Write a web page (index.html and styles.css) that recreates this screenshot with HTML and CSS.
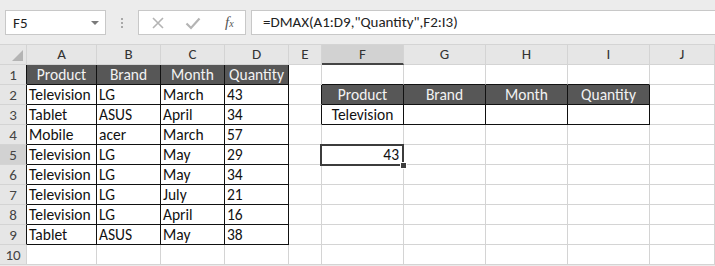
FILE: index.html
```html
<!DOCTYPE html>
<html lang="en">
<head>
    <meta charset="UTF-8">
    <meta name="viewport" content="width=device-width, initial-scale=1.0">
    <title>DMAX</title>
    <link rel="stylesheet" href="styles.css">
</head>
<body>
    <div class="toolbar">
        <div class="name-box">
            <span>F5</span>
            <span class="arrow"></span>
        </div>
        <div class="grip"><i></i><i></i><i></i></div>
        <div class="buttons">
            <svg class="btn" width="14" height="14" viewBox="0 0 14 14">
                <path d="M2 2 L12 12 M12 2 L2 12" stroke="#b4b4b4" stroke-width="1.6" fill="none"/>
            </svg>
            <svg class="btn" width="16" height="14" viewBox="0 0 16 14">
                <path d="M1.5 7.5 L6 12 L14.5 2.5" stroke="#b4b4b4" stroke-width="2.2" fill="none"/>
            </svg>
            <span class="fx">f<sub>x</sub></span>
        </div>
        <div class="formula">=DMAX(A1:D9,"Quantity",F2:I3)</div>
    </div>

    <div id="sheet" class="sheet"></div>

    <script>
        const letters = ['A', 'B', 'C', 'D', 'E', 'F', 'G', 'H', 'I', 'J'];

        // contenido de las filas 1 a 10, columnas A a J
        const rows = [
            ['Product', 'Brand', 'Month', 'Quantity', '', '', '', '', '', ''],
            ['Television', 'LG', 'March', '43', '', 'Product', 'Brand', 'Month', 'Quantity', ''],
            ['Tablet', 'ASUS', 'April', '34', '', 'Television', '', '', '', ''],
            ['Mobile', 'acer', 'March', '57', '', '', '', '', '', ''],
            ['Television', 'LG', 'May', '29', '', '43', '', '', '', ''],
            ['Television', 'LG', 'May', '34', '', '', '', '', '', ''],
            ['Television', 'LG', 'July', '21', '', '', '', '', '', ''],
            ['Television', 'LG', 'April', '16', '', '', '', '', '', ''],
            ['Tablet', 'ASUS', 'May', '38', '', '', '', '', '', ''],
            ['', '', '', '', '', '', '', '', '', '']
        ];

        // rangos con borde negro: [col inicio, fila inicio, col fin, fila fin]
        const boxes = [[1, 1, 4, 9], [6, 2, 9, 3]];
        const heads = [[1, 1, 4, 1], [6, 2, 9, 2]];
        const align = { 'F3': 'center', 'F5': 'right' };
        const active = { col: 6, row: 5 };

        function inRange(r, c, ranges) {
            return ranges.some(b => c >= b[0] && c <= b[2] && r >= b[1] && r <= b[3]);
        }

        const sheet = document.getElementById('sheet');

        function addCell(text, classes) {
            const div = document.createElement('div');
            div.className = classes.join(' ');
            div.textContent = text;
            sheet.appendChild(div);
            return div;
        }

        // fila de encabezados
        addCell('', ['corner']);
        letters.forEach((l, i) => {
            const cls = ['ch'];
            if (i + 1 === active.col) cls.push('on');
            addCell(l, cls);
        });

        for (let r = 1; r <= 10; r++) {
            const rh = ['rh'];
            if (r === active.row) rh.push('on');
            if (inRange(r, 1, boxes)) rh.push('br');
            addCell(r, rh);

            for (let c = 1; c <= 10; c++) {
                const cls = ['cell'];
                const boxed = inRange(r, c, boxes);
                if (boxed || inRange(r, c + 1, boxes)) cls.push('br');
                if (boxed || inRange(r + 1, c, boxes)) cls.push('bb');
                if (inRange(r, c, heads)) cls.push('head');
                const ref = letters[c - 1] + r;
                if (align[ref]) cls.push(align[ref]);
                if (c === active.col && r === active.row) cls.push('sel');
                addCell(rows[r - 1][c - 1], cls);
            }
        }
    </script>
</body>
</html>
```

FILE: styles.css
```css
body {
    margin: 0;
    background-color: #ebebeb;
    font-family: Carlito, Lato, "Liberation Sans", sans-serif;
    overflow: hidden;
}
.toolbar {
    display: flex;
    align-items: center;
    height: 44px;
    padding: 10px 0 9px 5px;
    box-sizing: border-box;
    background-color: #ececec;
}
.name-box {
    width: 101px;
    height: 25px;
    box-sizing: border-box;
    background-color: white;
    border: 1px solid #c8c8c8;
    display: flex;
    align-items: center;
    justify-content: space-between;
    padding: 0 6px 0 7px;
    font-size: 15px;
    color: #222;
}
.arrow {
    width: 0;
    height: 0;
    border-left: 4px solid transparent;
    border-right: 4px solid transparent;
    border-top: 4px solid #7a7a7a;
}
.grip {
    width: 32px;
    display: flex;
    flex-direction: column;
    align-items: center;
    gap: 2px;
}
.grip i {
    width: 2px;
    height: 2px;
    background-color: #a8a8a8;
}
.buttons {
    width: 108px;
    height: 25px;
    box-sizing: border-box;
    background-color: white;
    border: 1px solid #c8c8c8;
    display: flex;
    align-items: center;
    padding-left: 12px;
    gap: 20px;
}
.fx {
    font-family: "Liberation Serif", serif;
    font-style: italic;
    font-size: 15px;
    color: #555;
    margin-left: 4px;
}
.fx sub {
    font-size: 10px;
    vertical-align: 0;
}
.formula {
    flex: 1;
    height: 25px;
    margin-left: 5px;
    box-sizing: border-box;
    background-color: white;
    border: 1px solid #c8c8c8;
    border-right: none;
    padding-left: 11px;
    line-height: 23px;
    font-size: 15px;
    color: #222;
}
.sheet {
    display: grid;
    grid-template-columns: 27px 70px 64px 64px 64px 33px 82px 82px 82px 82px 1fr;
    grid-template-rows: 21px repeat(10, 20px);
    background-color: white;
    font-size: 15.5px;
}
.sheet > div {
    box-sizing: border-box;
    border-right: 1px solid #d4d4d4;
    border-bottom: 1px solid #d4d4d4;
    line-height: 20px;
    white-space: nowrap;
    overflow: hidden;
}
.corner {
    background-color: #e6e6e6;
    position: relative;
    border-top: 1px solid #d4d4d4;
}
.corner::after {
    content: "";
    position: absolute;
    right: 3px;
    bottom: 3px;
    width: 0;
    height: 0;
    border-left: 11px solid transparent;
    border-bottom: 11px solid #b4b4b4;
}
.ch {
    background-color: #e6e6e6;
    border-top: 1px solid #d4d4d4;
    text-align: center;
    color: #333;
    font-size: 15px;
    line-height: 19px !important;
}
.rh {
    background-color: #e6e6e6;
    text-align: center;
    color: #444;
    font-size: 15px;
}
.sheet > .on {
    background-color: #d2d2d2;
}
.sheet > .ch.on {
    border-bottom: 2px solid #444;
    line-height: 18px !important;
}
.cell {
    padding: 0 2px;
    color: #111;
}
.sheet > .br {
    border-right-color: #111;
}
.sheet > .bb {
    border-bottom-color: #111;
}
.head {
    background-color: #575757;
    color: #f2f2f2;
    text-align: center;
}
.center {
    text-align: center;
}
.right {
    text-align: right;
}
.sheet > .sel {
    position: relative;
    overflow: visible;
    padding-right: 4px;
}
.sel::before {
    content: "";
    position: absolute;
    left: -2px;
    top: -1px;
    right: -1px;
    bottom: -2px;
    border: 2px solid #3c3c3c;
}
.sel::after {
    content: "";
    position: absolute;
    right: -4px;
    bottom: -5px;
    width: 5px;
    height: 5px;
    background-color: #3c3c3c;
    border: 1px solid white;
}
```
